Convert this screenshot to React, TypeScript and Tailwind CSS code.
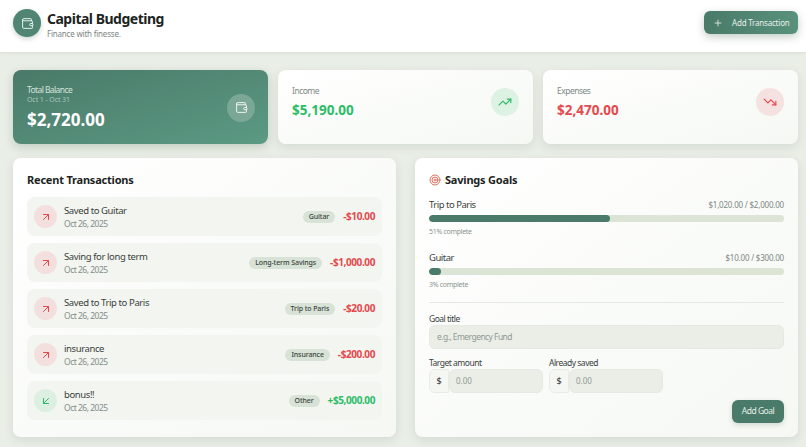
import { ArrowDownLeft, ArrowUpRight, Plus, Target, TrendingDown, TrendingUp, Wallet } from "lucide-react";

const transactions = [
  { title: "Saved to Guitar", date: "Oct 26, 2025", tag: "Guitar", amount: "-$10.00", income: false },
  { title: "Saving for long term", date: "Oct 26, 2025", tag: "Long-term Savings", amount: "-$1,000.00", income: false },
  { title: "Saved to Trip to Paris", date: "Oct 26, 2025", tag: "Trip to Paris", amount: "-$20.00", income: false },
  { title: "insurance", date: "Oct 26, 2025", tag: "Insurance", amount: "-$200.00", income: false },
  { title: "bonus!!", date: "Oct 26, 2025", tag: "Other", amount: "+$5,000.00", income: true },
];

const goals = [
  { title: "Trip to Paris", saved: "$1,020.00 / $2,000.00", percent: 51 },
  { title: "Guitar", saved: "$10.00 / $300.00", percent: 3 },
];

const cardClass =
  "rounded-lg bg-gradient-to-br from-white to-[#f5f8f3] shadow-[0_3px_10px_rgba(60,90,70,0.12)]";

function MoneyInput({ label }: { label: string }) {
  return (
    <div>
      <div className="mt-[9px] mb-[1px] h-[10px] text-[8.5px] leading-[10px] tracking-[-0.5px] text-[#3a3f3c]">{label}</div>
      <div className="flex h-6 w-[114px]">
        <div className="flex w-[20px] items-center justify-center rounded-l-md border border-[#e8ece5] bg-[#f5f7f3] text-[9px] text-[#2f3331]">
          $
        </div>
        <div className="flex flex-1 items-center rounded-md border border-[#e4e9e1] bg-[#eaeee7] pl-[6px] text-[8px] text-[#8f9a93]">
          0.00
        </div>
      </div>
    </div>
  );
}

export default function App() {
  return (
    <div className="h-[447px] w-[806px] overflow-hidden bg-[#e9eee6] font-['Noto_Sans',sans-serif]">
      <header className="flex h-[52px] items-start justify-between bg-white pl-[13px] pr-2 pt-[9px] shadow-[0_1px_3px_rgba(60,90,70,0.1)]">
        <div className="flex items-start gap-[6px]">
          <div className="flex h-7 w-7 items-center justify-center rounded-full bg-[#4f8572] text-white shadow-[0_2px_5px_rgba(60,90,70,0.25)]">
            <Wallet size={13} strokeWidth={1.6} />
          </div>
          <div>
            <h1 className="text-[14px] leading-[19px] font-bold tracking-[-0.5px] text-[#1c2422]">Capital Budgeting</h1>
            <p className="text-[8px] leading-[11px] tracking-[-0.2px] text-[#7d8783]">Finance with finesse.</p>
          </div>
        </div>
        <button className="mt-[2px] flex h-[23px] w-[94px] items-center whitespace-nowrap rounded-md bg-gradient-to-r from-[#4a7a69] to-[#58917c] pl-[9px] text-[8px] tracking-[-0.2px] text-[#e6efea] shadow-[0_3px_8px_rgba(60,90,70,0.3)]">
          <Plus size={10} strokeWidth={2} className="mr-[9px]" />
          Add Transaction
        </button>
      </header>

      <div className="px-[8px] pt-[18px] pl-[13px]">
        <section className="grid grid-cols-3 gap-[10px]">
          <div className="flex h-[74px] items-center justify-between rounded-lg bg-gradient-to-br from-[#4a7a69] to-[#5b9a84] pl-[14px] pr-[13px] shadow-[0_3px_10px_rgba(60,90,70,0.22)]">
            <div className="mt-[1px]">
              <div className="text-[8.5px] leading-[11px] tracking-[-0.6px] text-[#d5e3dc]">Total Balance</div>
              <div className="text-[7px] leading-[10px] tracking-[-0.1px] text-[#a9c6ba]">Oct 1 - Oct 31</div>
              <div className="mt-[3px] text-[17px] leading-[23px] font-bold text-white">$2,720.00</div>
            </div>
            <div className="mt-[1px] flex h-7 w-7 items-center justify-center rounded-full bg-[#7ba797] text-white">
              <Wallet size={13} strokeWidth={1.6} />
            </div>
          </div>
          <div className={`${cardClass} flex h-[74px] items-start justify-between px-[14px] pt-[14px]`}>
            <div>
              <div className="text-[8.5px] leading-[13px] tracking-[-0.5px] text-[#7f8985]">Income</div>
              <div className="mt-[4px] text-[13.5px] leading-[19px] font-bold text-[#2dbd68]">$5,190.00</div>
            </div>
            <div className="mt-[4px] flex h-7 w-7 items-center justify-center rounded-full bg-[#ddf2e3] text-[#2fb866]">
              <TrendingUp size={14} strokeWidth={2} />
            </div>
          </div>
          <div className={`${cardClass} flex h-[74px] items-start justify-between px-[14px] pt-[14px]`}>
            <div>
              <div className="text-[8.5px] leading-[13px] tracking-[-0.5px] text-[#7f8985]">Expenses</div>
              <div className="mt-[4px] text-[13.5px] leading-[19px] font-bold text-[#e5484d]">$2,470.00</div>
            </div>
            <div className="mt-[4px] flex h-7 w-7 items-center justify-center rounded-full bg-[#f5e1e0] text-[#e5484d]">
              <TrendingDown size={14} strokeWidth={2} />
            </div>
          </div>
        </section>

        <section className="mt-[14px] grid grid-cols-2 gap-[19px]">
          <div className={`${cardClass} h-[279px] px-[14px] pt-[13px]`}>
            <h2 className="h-[26px] text-[11px] leading-[17px] font-bold tracking-[-0.2px] text-[#1c2422]">Recent Transactions</h2>
            <div className="flex flex-col gap-[7px]">
              {transactions.map((t, index) => (
                <div
                  key={index}
                  className="flex h-[39px] items-center rounded-lg bg-[#f2f5f0] pl-[7px] pr-[7px]"
                >
                  <div
                    className={`flex h-[23px] w-[23px] items-center justify-center rounded-full ${
                      t.income ? "bg-[#dcf0e2] text-[#2fb866]" : "bg-[#f3e0de] text-[#e5484d]"
                    }`}
                  >
                    {t.income ? <ArrowDownLeft size={12} strokeWidth={2} /> : <ArrowUpRight size={12} strokeWidth={2} />}
                  </div>
                  <div className="ml-[7px] flex-1">
                    <div className="text-[9.5px] leading-[13px] tracking-[-0.4px] text-[#3a3f3c]">{t.title}</div>
                    <div className="mt-[1px] text-[8.5px] leading-[11px] tracking-[-0.5px] text-[#848e89]">{t.date}</div>
                  </div>
                  <span className="rounded-full bg-[#d8e2d6] px-[6px] text-[7px] leading-[12px] font-medium tracking-[-0.1px] text-[#3a4440]">
                    {t.tag}
                  </span>
                  <span
                    className={`ml-[8px] text-[10px] font-bold tracking-[-0.4px] ${t.income ? "text-[#2dbd68]" : "text-[#e5484d]"}`}
                  >
                    {t.amount}
                  </span>
                </div>
              ))}
            </div>
          </div>

          <div className={`${cardClass} h-[279px] px-[14px] pt-[13px]`}>
            <h2 className="flex h-[27px] items-start gap-[4px] text-[11px] leading-[17px] font-bold tracking-[-0.2px] text-[#1c2422]">
              <Target size={12} strokeWidth={2} className="mt-[3px] text-[#d9705f]" />
              Savings Goals
            </h2>
            {goals.map((g, index) => (
              <div key={index} className="mb-[13px] h-[40px]">
                <div className="flex items-center justify-between">
                  <span className="text-[9.5px] leading-[14px] tracking-[-0.5px] text-[#3a3f3c]">{g.title}</span>
                  <span className="text-[8px] leading-[14px] tracking-[-0.2px] text-[#7d8783]">{g.saved}</span>
                </div>
                <div className="mt-[3px] h-[7px] overflow-hidden rounded-full bg-[#dbe4d5]">
                  <div className="h-full rounded-full bg-[#4a7a69]" style={{ width: `${Math.max(g.percent, 3.4)}%` }} />
                </div>
                <div className="mt-[5px] text-[7px] leading-[10px] tracking-[-0.3px] text-[#8a948f]">{g.percent}% complete</div>
              </div>
            ))}
            <div className="-mt-[2px] border-t border-[#e4e9e1] pt-[10px]">
              <div className="h-[12px] text-[8.5px] leading-[12px] tracking-[-0.5px] text-[#3a3f3c]">Goal title</div>
              <div className="flex h-6 items-center rounded-md border border-[#e4e9e1] bg-[#eaeee7] pl-[7px] text-[8.5px] tracking-[-0.55px] text-[#8f9a93]">
                e.g., Emergency Fund
              </div>
              <div className="flex gap-[6px]">
                <MoneyInput label="Target amount" />
                <MoneyInput label="Already saved" />
              </div>
              <div className="mt-[7px] flex justify-end">
                <button className="h-[23px] w-[52px] rounded-md bg-[#4a7a69] text-[8.5px] tracking-[-0.5px] text-[#e6efea] shadow-[0_2px_5px_rgba(60,90,70,0.2)]">
                  Add Goal
                </button>
              </div>
            </div>
          </div>
        </section>
      </div>
    </div>
  );
}
